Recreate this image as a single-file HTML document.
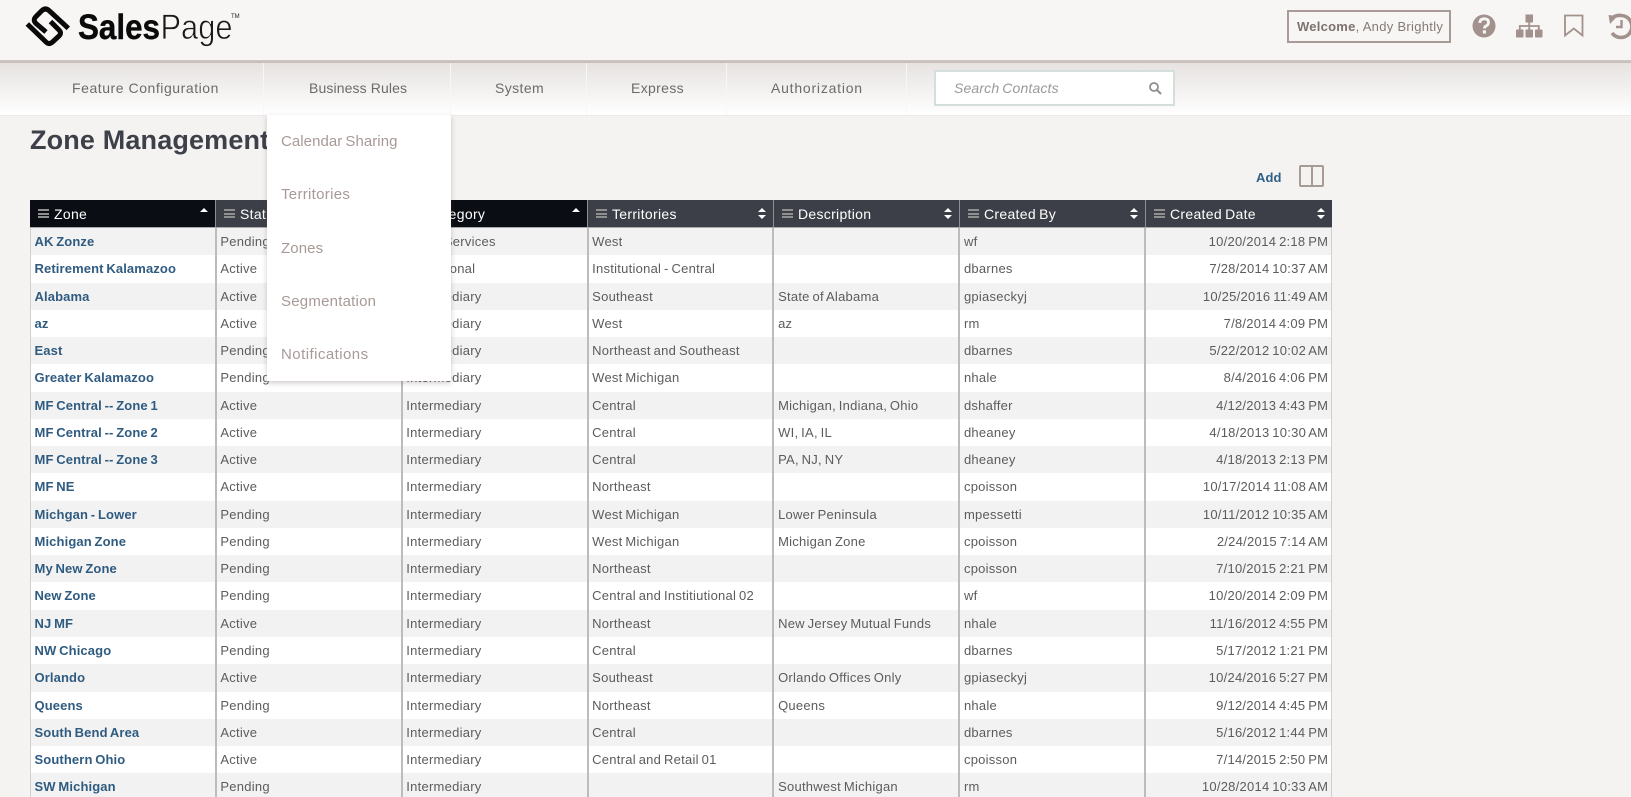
<!DOCTYPE html>
<html><head><meta charset="utf-8"><title>Zone Management</title>
<style>
*{box-sizing:border-box}
html,body{margin:0;padding:0}
body{width:1631px;height:797px;overflow:hidden;position:relative;background:#f4f3f1;font-family:"Liberation Sans",sans-serif;}
#w{position:absolute;left:0;top:0;width:1631px;height:797px;overflow:hidden;filter:blur(.3px)}
.a{position:absolute;white-space:nowrap}
#top{left:0;top:0;width:1631px;height:61px;background:#f7f6f4}
#line{left:0;top:60px;width:1631px;height:3px;background:linear-gradient(#d0c8c5,#c6bdba)}
#nav{left:0;top:63px;width:1631px;height:53px;background:linear-gradient(#e6e3e1,#f3f1f0 50%,#fff);border-bottom:1px solid #eceae8}
.n{top:78.500px;font-size:14px;line-height:18px;color:#6e6a68;letter-spacing:.35px}
.sep{top:63px;width:1px;height:52px;background:#f1efee;border-right:1px solid #f8f7f6}
#search{left:934px;top:70px;width:241px;height:36px;background:#fff;border:2px solid #d4dedd}
#ph{left:954px;top:79px;font-size:14px;line-height:18px;font-style:italic;color:#999;letter-spacing:.15px;word-spacing:-1px}
#title{left:30px;top:124px;font-size:27px;line-height:32px;font-weight:bold;color:#3d4049;letter-spacing:.15px}
#add{left:1256px;top:170px;font-size:13px;line-height:16px;font-weight:bold;color:#2e5f86;letter-spacing:.1px}
#colbtn{left:1299px;top:165px;width:25px;height:22px;border:2px solid #a89a96;border-radius:2px}
#colbtn:after{content:"";position:absolute;left:10px;top:0;width:2px;height:18px;background:#a89a96}
#wel{left:1287px;top:10px;width:164px;height:33px;border:2px solid #a89a96;font-size:13px;line-height:29px;color:#857a76;padding-left:8px;letter-spacing:.3px}
#wel b{color:#7d716d;letter-spacing:.25px}
#hd{left:30px;top:200px;width:1302px;height:28px;display:flex;background:#3c3f47;border-bottom:1px solid #aaa}
.h{width:186px;height:27px;position:relative;color:#fff;font-size:14px;line-height:28.500px;padding-left:24px;letter-spacing:.3px;word-spacing:-1px;white-space:nowrap;background:#3c3f47;border-right:1px solid #8c8e92}
.h.k{background:#0b0d14}
.h i{position:absolute;left:8px;top:9px;width:11px;height:9px;border-top:2px solid #8f8f8f;border-bottom:2px solid #8f8f8f}
.h i:after{content:"";position:absolute;left:0;top:1.5px;width:11px;height:2px;background:#8f8f8f}
.h u{position:absolute;right:7px;top:8px;width:0;height:0;border-left:4px solid transparent;border-right:4px solid transparent;border-bottom:4px solid #fff}
.h s{position:absolute;right:7px;top:14.5px;width:0;height:0;border-left:4px solid transparent;border-right:4px solid transparent;border-top:4px solid #fff}
#rows{left:30px;top:228px;width:1302px}
.r{display:flex;height:27.28px;font-size:13px;line-height:27.28px;color:#5c5c5c;background:#fff;letter-spacing:.25px;word-spacing:-1px}
.r:nth-child(odd){background:#f2f2f2}
.r span{width:185.9px;padding-left:4.5px;white-space:nowrap;overflow:hidden;flex:none}
.r span:first-child{font-weight:bold;color:#2f5b80;letter-spacing:.12px;word-spacing:-1px}
.r span:last-child{text-align:right;padding-right:3px}
.v{top:228px;width:2px;height:569px;background:#bcbcbc}
#menu{left:267px;top:115px;width:184px;height:266px;background:#fff;box-shadow:0 2px 5px rgba(90,70,70,.28);z-index:5}
#menu div{position:absolute;left:14px;font-size:15px;line-height:18px;color:#a89a96;letter-spacing:.3px;white-space:nowrap}
svg{position:absolute;overflow:visible}
</style></head><body><div id="w">
<div class="a" id="top"></div><div class="a" id="line"></div><div class="a" id="nav"></div>

<svg style="left:0;top:0" width="240" height="60">
<g fill="none" stroke="#0a0a0a" stroke-width="5" stroke-linejoin="round" stroke-linecap="butt">
<path d="M68.300 28.300 L49 10.500 Q45.500 7.500 42 10.500 L36 16.500 Q32.500 20 36 23.500 L46 32"/>
<path d="M27.300 24 L46 42 Q49 45 52.500 42 L59 36 Q62 33 59 30 L50.500 21.500"/>
</g>
<text x="78" y="39" font-family="Liberation Sans, sans-serif" font-weight="bold" font-size="35" fill="#0a0a0a" stroke="#0a0a0a" stroke-width=".4" textLength="82" lengthAdjust="spacingAndGlyphs">Sales</text>
<text x="160.500" y="39" font-family="Liberation Sans, sans-serif" font-size="35" fill="#1a1a1a" textLength="72" lengthAdjust="spacingAndGlyphs" stroke="#f7f6f4" stroke-width=".7">Page</text>
<text x="231" y="18" font-family="Liberation Sans, sans-serif" font-size="6" fill="#222">TM</text>
</svg>

<div class="a" id="wel"><b>Welcome</b>, Andy Brightly</div>
<svg style="left:1465px;top:5px" width="166" height="45">
<circle cx="19" cy="21" r="11.500" fill="#a2918c"/>
<path d="M14.800 18 Q15 13.800 19.300 13.800 Q23.500 13.800 23.500 17.500 Q23.500 19.800 21 21 Q19.500 21.800 19.500 23.500" fill="none" stroke="#f7f6f4" stroke-width="2.800"/>
<rect x="17.800" y="25.300" width="3.200" height="3.200" fill="#f7f6f4"/>
<g fill="#a2918c">
<rect x="60.500" y="9.500" width="7.500" height="8"/>
<rect x="51" y="24.500" width="7.500" height="8" rx="1"/><rect x="60.500" y="24.500" width="7.500" height="8" rx="1"/><rect x="70" y="24.500" width="7.500" height="8" rx="1"/>
</g>
<path d="M64.200 17 V24.500 M54.800 24.500 V21 H73.800 V24.500" fill="none" stroke="#a2918c" stroke-width="1.800"/>
<path d="M100 10.500 H117.500 V30.500 L108.800 23.500 L100 30.500 Z" fill="none" stroke="#a2918c" stroke-width="1.800"/>
<path d="M147 13 Q152 9.500 156 10.500 A11 11 0 1 1 147 28" fill="none" stroke="#a2918c" stroke-width="3.600"/>
<path d="M143.500 10 L152.500 11 L145 19 Z" fill="#a2918c"/>
<path d="M156.500 15 V22 H151" fill="none" stroke="#a2918c" stroke-width="2.400"/>
</svg>

<div class="a sep" style="left:263px"></div><div class="a sep" style="left:450px"></div><div class="a sep" style="left:586px"></div><div class="a sep" style="left:726px"></div><div class="a sep" style="left:906px"></div>
<div class="a n" style="left:72px;letter-spacing:.55px">Feature Configuration</div>
<div class="a n" style="left:309px;letter-spacing:.12px">Business Rules</div>
<div class="a n" style="left:495px;letter-spacing:.4px">System</div>
<div class="a n" style="left:631px;letter-spacing:.35px">Express</div>
<div class="a n" style="left:771px;letter-spacing:.78px">Authorization</div>
<div class="a" id="search"></div><div class="a" id="ph">Search Contacts</div>
<svg style="left:1148px;top:81px" width="14" height="14"><circle cx="6" cy="6" r="4" fill="none" stroke="#8e8e8e" stroke-width="1.800"/><path d="M9 9 L13 13" stroke="#8e8e8e" stroke-width="2"/></svg>

<div class="a" id="title">Zone Management</div>
<div class="a" id="add">Add</div><div class="a" id="colbtn"></div>

<div class="a" id="hd">
<div class="h k"><i></i>Zone<u></u></div>
<div class="h"><i></i>Status<u></u><s></s></div>
<div class="h k"><i></i>Category<u></u></div>
<div class="h"><i></i>Territories<u></u><s></s></div>
<div class="h"><i></i>Description<u></u><s></s></div>
<div class="h"><i></i>Created By<u></u><s></s></div>
<div class="h" style="border-right:0"><i></i>Created Date<u></u><s></s></div>
</div>

<div class="a" id="rows">
<div class="r"><span>AK Zonze</span><span>Pending</span><span>Retail Services</span><span>West</span><span></span><span>wf</span><span>10/20/2014 2:18 PM</span></div>
<div class="r"><span>Retirement Kalamazoo</span><span>Active</span><span>Institutional</span><span>Institutional - Central</span><span></span><span>dbarnes</span><span>7/28/2014 10:37 AM</span></div>
<div class="r"><span>Alabama</span><span>Active</span><span>Intermediary</span><span>Southeast</span><span>State of Alabama</span><span>gpiaseckyj</span><span>10/25/2016 11:49 AM</span></div>
<div class="r"><span>az</span><span>Active</span><span>Intermediary</span><span>West</span><span>az</span><span>rm</span><span>7/8/2014 4:09 PM</span></div>
<div class="r"><span>East</span><span>Pending</span><span>Intermediary</span><span>Northeast and Southeast</span><span></span><span>dbarnes</span><span>5/22/2012 10:02 AM</span></div>
<div class="r"><span>Greater Kalamazoo</span><span>Pending</span><span>Intermediary</span><span>West Michigan</span><span></span><span>nhale</span><span>8/4/2016 4:06 PM</span></div>
<div class="r"><span>MF Central -- Zone 1</span><span>Active</span><span>Intermediary</span><span>Central</span><span>Michigan, Indiana, Ohio</span><span>dshaffer</span><span>4/12/2013 4:43 PM</span></div>
<div class="r"><span>MF Central -- Zone 2</span><span>Active</span><span>Intermediary</span><span>Central</span><span>WI, IA, IL</span><span>dheaney</span><span>4/18/2013 10:30 AM</span></div>
<div class="r"><span>MF Central -- Zone 3</span><span>Active</span><span>Intermediary</span><span>Central</span><span>PA, NJ, NY</span><span>dheaney</span><span>4/18/2013 2:13 PM</span></div>
<div class="r"><span>MF NE</span><span>Active</span><span>Intermediary</span><span>Northeast</span><span></span><span>cpoisson</span><span>10/17/2014 11:08 AM</span></div>
<div class="r"><span>Michgan - Lower</span><span>Pending</span><span>Intermediary</span><span>West Michigan</span><span>Lower Peninsula</span><span>mpessetti</span><span>10/11/2012 10:35 AM</span></div>
<div class="r"><span>Michigan Zone</span><span>Pending</span><span>Intermediary</span><span>West Michigan</span><span>Michigan Zone</span><span>cpoisson</span><span>2/24/2015 7:14 AM</span></div>
<div class="r"><span>My New Zone</span><span>Pending</span><span>Intermediary</span><span>Northeast</span><span></span><span>cpoisson</span><span>7/10/2015 2:21 PM</span></div>
<div class="r"><span>New Zone</span><span>Pending</span><span>Intermediary</span><span>Central and Institiutional 02</span><span></span><span>wf</span><span>10/20/2014 2:09 PM</span></div>
<div class="r"><span>NJ MF</span><span>Active</span><span>Intermediary</span><span>Northeast</span><span>New Jersey Mutual Funds</span><span>nhale</span><span>11/16/2012 4:55 PM</span></div>
<div class="r"><span>NW Chicago</span><span>Pending</span><span>Intermediary</span><span>Central</span><span></span><span>dbarnes</span><span>5/17/2012 1:21 PM</span></div>
<div class="r"><span>Orlando</span><span>Active</span><span>Intermediary</span><span>Southeast</span><span>Orlando Offices Only</span><span>gpiaseckyj</span><span>10/24/2016 5:27 PM</span></div>
<div class="r"><span>Queens</span><span>Pending</span><span>Intermediary</span><span>Northeast</span><span>Queens</span><span>nhale</span><span>9/12/2014 4:45 PM</span></div>
<div class="r"><span>South Bend Area</span><span>Active</span><span>Intermediary</span><span>Central</span><span></span><span>dbarnes</span><span>5/16/2012 1:44 PM</span></div>
<div class="r"><span>Southern Ohio</span><span>Active</span><span>Intermediary</span><span>Central and Retail 01</span><span></span><span>cpoisson</span><span>7/14/2015 2:50 PM</span></div>
<div class="r"><span>SW Michigan</span><span>Pending</span><span>Intermediary</span><span></span><span>Southwest Michigan</span><span>rm</span><span>10/28/2014 10:33 AM</span></div>
</div>
<div class="a v" style="left:30px;background:#d0d0d0;width:1px"></div>
<div class="a v" style="left:215px"></div><div class="a v" style="left:401px"></div><div class="a v" style="left:587px"></div><div class="a v" style="left:772px"></div><div class="a v" style="left:958px"></div><div class="a v" style="left:1144px"></div>
<div class="a v" style="left:1331px;background:#d0d0d0;width:1px"></div>

<div class="a" id="menu">
<div style="top:18px;word-spacing:-1.2px;letter-spacing:.06px">Calendar Sharing</div>
<div style="top:71px">Territories</div>
<div style="top:124.500px;letter-spacing:.1px">Zones</div>
<div style="top:177.500px;letter-spacing:.22px">Segmentation</div>
<div style="top:231px;letter-spacing:.45px">Notifications</div>
</div>
</div></body></html>
